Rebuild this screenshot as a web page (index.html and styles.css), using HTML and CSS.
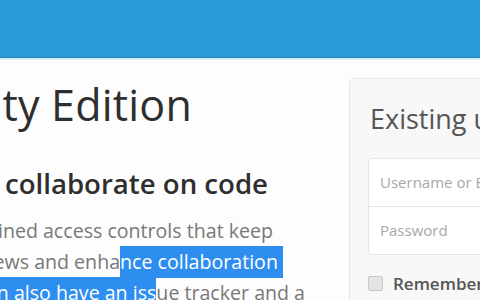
FILE: index.html
```html
<!DOCTYPE html>
<html>
<head>
<meta charset="utf-8">
<link rel="stylesheet" href="styles.css">
</head>
<body>
<header class="topbar"></header>
<div class="topline"></div>
<main class="page">
  <section class="intro">
    <h1 class="title">GitLab Community Edition</h1>
    <h2 class="subtitle">Open source software to collaborate on code</h2>
    <p class="lead">
      <span class="line l1">Manage Git repositories with fine-grained access controls that keep</span>
      <span class="line l2">your code secure. Perform code reviews and enha<span class="sel">nce collaboration&nbsp;</span></span>
      <span class="line l3"><span class="sel">with merge requests. Each project can also have an iss</span>ue tracker and a</span>
      <span class="line l4">wiki.</span>
    </p>
  </section>
  <aside class="login">
    <h3 class="login-title">Existing user? Sign in</h3>
    <div class="fields">
      <div class="field">Username or Email</div>
      <div class="field">Password</div>
    </div>
    <label class="remember"><span class="box"></span>Remember me</label>
  </aside>
</main>
</body>
</html>
```

FILE: styles.css
```css
html, body {
  margin: 0;
  padding: 0;
  overflow: hidden;
  background: #fdfdfd;
  width: 480px;
  height: 300px;
}
body {
  font-family: "Open Sans", "Noto Sans", sans-serif;
}
.topbar {
  height: 57px;
  background: #2a9ad6;
  border-bottom: 1px solid #2b84ba;
}
.topline {
  height: 2px;
  background: #d3f0fa;
}
.page {
  display: flex;
  align-items: flex-start;
  gap: 44px;
}
.intro {
  flex: none;
  width: 700px;
  margin-left: -395px;
}
.title {
  margin: 20px 0 0;
  font-size: 43px;
  font-weight: 400;
  line-height: 50px;
  color: #2e2e2e;
  text-align: right;
  padding-right: 113px;
  white-space: nowrap;
  letter-spacing: 0.2px;
}
.subtitle {
  margin: 37px 0 0;
  font-size: 27.6px;
  font-weight: 600;
  line-height: 32px;
  color: #2e2e2e;
  text-align: right;
  padding-right: 37px;
  white-space: nowrap;
}
.lead {
  margin: 16px 0 0;
  font-size: 19.6px;
  line-height: 31px;
  color: #787878;
  white-space: nowrap;
}
.line {
  display: block;
  text-align: right;
}
.l1 { padding-right: 32px; }
.l2 { padding-right: 22px; }
.l3 { padding-right: 0; }
.sel {
  background: #2e8ef0;
  color: #fff;
  padding: 2px 0 3px;
}
.login {
  flex: none;
  width: 220px;
  margin-top: 18px;
  background: #f8f8f8;
  border: 1px solid #e6e6e6;
  border-radius: 5px;
  padding: 22px 18px 20px;
}
.login-title {
  margin: 0 0 21px 2px;
  font-size: 27px;
  font-weight: 400;
  line-height: 36px;
  color: #555;
  white-space: nowrap;
}
.fields {
  background: #fff;
  border: 1px solid #e6e6e6;
  border-radius: 4px;
}
.field {
  height: 47px;
  line-height: 47px;
  padding-left: 11px;
  font-size: 15px;
  color: #a8a8a8;
  white-space: nowrap;
}
.field + .field {
  border-top: 1px solid #e6e6e6;
}
.remember {
  display: flex;
  align-items: center;
  gap: 10px;
  margin-top: 17px;
  font-size: 17px;
  font-weight: 600;
  color: #555;
  white-space: nowrap;
}
.box {
  width: 13px;
  height: 13px;
  border: 1px solid #c8c8c8;
  background: #e4e4e4;
  border-radius: 2px;
}
```
